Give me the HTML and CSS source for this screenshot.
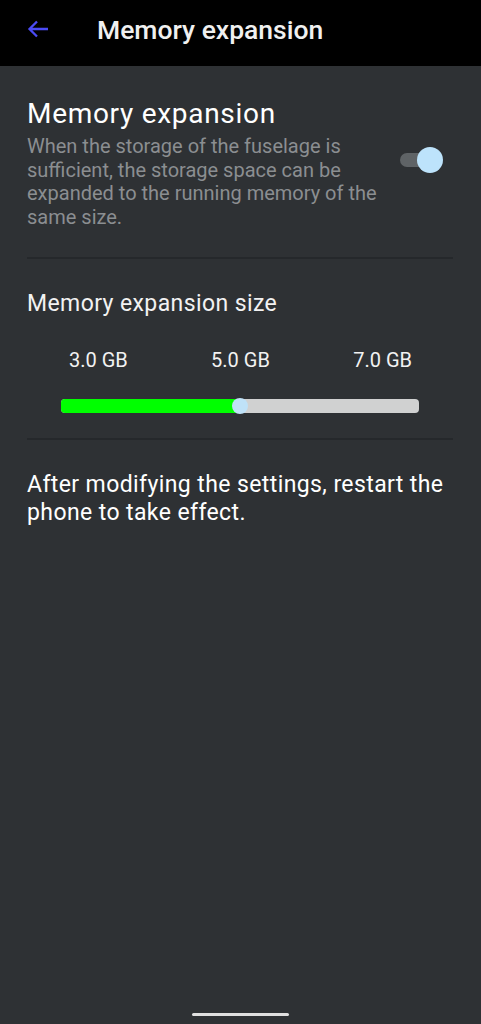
FILE: index.html
```html
<!DOCTYPE html>
<html lang="en">
<head>
	<meta charset="UTF-8">
	<title>Memory expansion</title>
	<link rel="stylesheet" href="styles.css">
</head>
<body>

	<div class="topbar">
		<a class="back" href="#">
			<svg width="22" height="18" viewBox="0 0 22 18">
				<path d="M21 9H2.5M10 1.5L2.5 9l7.5 7.5" fill="none" stroke="#4b4bf5" stroke-width="2.3"/>
			</svg>
		</a>
		<h1>Memory expansion</h1>
	</div>

	<div class="content">
		<div class="switch-row">
			<div class="text">
				<h2>Memory expansion</h2>
				<p>When the storage of the fuselage is sufficient, the storage space can be expanded to the running memory of the same size.</p>
			</div>
			<div class="toggle on"><span class="knob"></span></div>
		</div>

		<div class="line"></div>

		<div class="size">
			<h3>Memory expansion size</h3>
			<ul class="marks">
				<li>3.0 GB</li>
				<li>5.0 GB</li>
				<li>7.0 GB</li>
			</ul>
			<div class="bar">
				<div class="fill" style="width: 50%"></div>
				<span class="thumb" style="left: 50%"></span>
			</div>
		</div>

		<div class="line"></div>

		<p class="note">After modifying the settings, restart the phone to take effect.</p>
	</div>

	<div class="home"></div>
</body>
</html>
```

FILE: styles.css
```css
* {
	padding: 0;
	margin: 0;
}

ul,ol {
	list-style: none;
}

html, body {
	height: 100%;
}

body {
	background-color: #2e3134;
	font-family: Roboto, "Noto Sans", sans-serif;
	color: #f2f2f2;
	display: flex;
	flex-direction: column;
}

.topbar {
	height: 66px;
	background-color: #000;
	display: flex;
	align-items: flex-start;
	padding-left: 27px;
	flex-shrink: 0;
}

.back {
	display: block;
	width: 22px;
	height: 18px;
	margin-top: 20px;
}

.back svg {
	display: block;
}

.topbar h1 {
	font-size: 26.5px;
	font-weight: 500;
	line-height: 32px;
	margin: 14px 0 0 48px;
	color: #f0f0f0;
}

.content {
	padding: 0 28px 0 27px;
}

.switch-row {
	display: flex;
	align-items: center;
	padding: 32px 0 27px;
}

.switch-row .text {
	flex: 1;
	padding-right: 12px;
}

.switch-row h2 {
	font-size: 28px;
	font-weight: 400;
	letter-spacing: 0.7px;
	line-height: 32px;
	color: #fff;
}

.switch-row p {
	margin-top: 5px;
	font-size: 20px;
	line-height: 23.7px;
	color: #8b8e91;
}

.toggle {
	flex-shrink: 0;
	width: 35px;
	height: 14px;
	border-radius: 7px;
	background-color: #5f6366;
	position: relative;
	margin-right: 18px;
	margin-bottom: 8px;
}

.toggle .knob {
	position: absolute;
	width: 26px;
	height: 26px;
	border-radius: 50%;
	background-color: #bde3fb;
	top: -6px;
	right: -8px;
}

.line {
	height: 2px;
	background-color: #25282b;
}

.size {
	padding: 31px 0 25px;
}

.size h3 {
	font-size: 23px;
	font-weight: 400;
	letter-spacing: 0.4px;
	line-height: 28px;
}

.marks {
	display: flex;
	justify-content: space-between;
	padding: 30px 41px 0 42px;
	font-size: 20px;
	line-height: 24px;
}

.bar {
	position: relative;
	height: 14px;
	margin: 27px 34px 0;
	border-radius: 4px;
	background-color: #d0d1d1;
}

.bar .fill {
	height: 100%;
	border-radius: 4px 0 0 4px;
	background-color: #00ff00;
}

.bar .thumb {
	position: absolute;
	top: -1px;
	width: 16px;
	height: 16px;
	margin-left: -8px;
	border-radius: 50%;
	background-color: #bfe2f8;
}

.note {
	padding-top: 31px;
	font-size: 23px;
	letter-spacing: 0.4px;
	line-height: 28.4px;
	color: #fff;
}

.home {
	margin: auto auto 8px;
	width: 97px;
	height: 3px;
	border-radius: 2px;
	background-color: #e0e0e0;
}
```
